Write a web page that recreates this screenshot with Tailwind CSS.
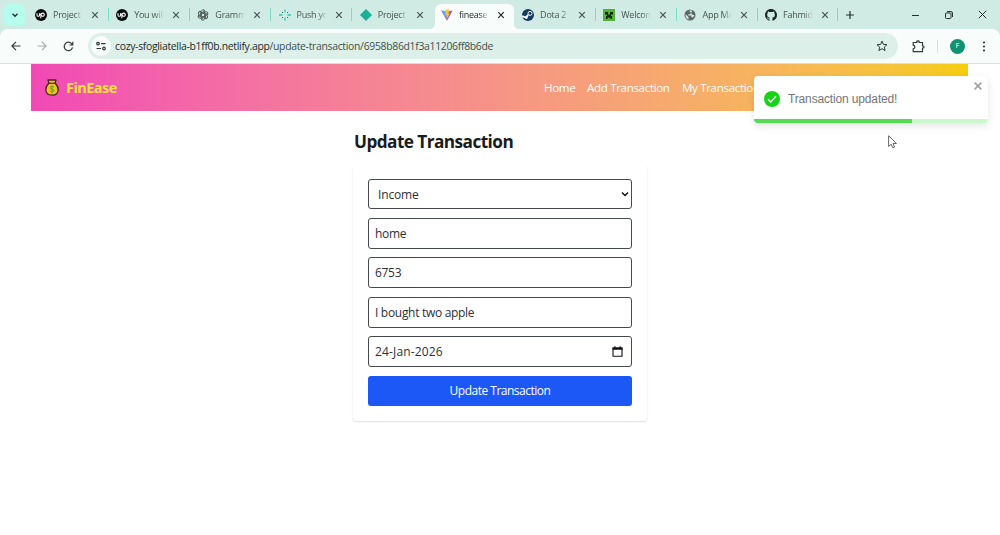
<!DOCTYPE html>
<html lang="en">
  <head>
    <meta charset="UTF-8" />
    <meta name="viewport" content="width=device-width, initial-scale=1.0" />
    <title>finease</title>
    <script src="https://cdn.jsdelivr.net/npm/@tailwindcss/browser@4"></script>
  </head>
  <body
    class="h-[535px] w-[1000px] overflow-hidden bg-white font-['Open_Sans','Noto_Sans',sans-serif] text-[#2b3038]"
  >
    <!-- Shared icons for the tabs -->
    <svg class="hidden">
      <symbol id="close" viewBox="0 0 8 8">
        <path d="M1.2 1.2l5.6 5.6M6.8 1.2L1.2 6.8" fill="none" stroke="currentColor" stroke-width="1.2" />
      </symbol>
      <symbol id="upwork" viewBox="0 0 12 12">
        <circle cx="6" cy="6" r="6" fill="#080b0b" />
        <path d="M2 4.2v1.7q0 1.4 1.3 1.4t1.3-1.4V4.2q1 3.1 3.1 3.1A1.6 1.6 0 1 0 6.1 5.700L5.700 9.200" fill="none" stroke="#fff" stroke-width="1.1" />
      </symbol>
    </svg>

    <!-- Tab strip -->
    <div class="flex h-[29px] bg-[#d0ebe3] text-[9px] tracking-[-0.25px] text-[#46544f]">
      <button class="mt-1 ml-1 flex h-[22px] w-[21px] shrink-0 items-center justify-center rounded-md bg-[#b5fdec] text-[#17342d]">
        <svg class="size-2" viewBox="0 0 8 8"><path d="M1.5 2.8L4 5.2l2.5-2.4" fill="none" stroke="currentColor" stroke-width="1.4" /></svg>
      </button>

      <div class="ml-[2.4px] flex w-[81.2px] shrink-0 items-center pl-[7.6px]">
        <svg class="size-3 shrink-0"><use href="#upwork" /></svg>
        <span class="mt-px ml-[6px] w-[30px] whitespace-nowrap mask-r-from-70%">Project</span>
        <svg class="ml-[8px] size-2 shrink-0"><use href="#close" /></svg>
        <i class="ml-auto h-[13px] w-px bg-[#72e1c6]"></i>
      </div>
      <div class="flex w-[81.2px] shrink-0 items-center pl-[7.6px]">
        <svg class="size-3 shrink-0"><use href="#upwork" /></svg>
        <span class="mt-px ml-[6px] w-[30px] whitespace-nowrap mask-r-from-70%">You will</span>
        <svg class="ml-[8px] size-2 shrink-0"><use href="#close" /></svg>
        <i class="ml-auto h-[13px] w-px bg-[#72e1c6]"></i>
      </div>
      <div class="flex w-[81.2px] shrink-0 items-center pl-[7.6px]">
        <svg class="size-3 shrink-0" viewBox="0 0 12 12" fill="none" stroke="#4d5a56" stroke-width="1">
          <path d="M4.300 6.900V2.800a2 2 0 0 1 3.700-1L4.300 4" />
          <path d="M4.300 6.900V2.800a2 2 0 0 1 3.700-1L4.300 4" transform="rotate(60 6 6)" />
          <path d="M4.300 6.900V2.800a2 2 0 0 1 3.700-1L4.300 4" transform="rotate(120 6 6)" />
          <path d="M4.300 6.900V2.800a2 2 0 0 1 3.700-1L4.300 4" transform="rotate(180 6 6)" />
          <path d="M4.300 6.900V2.800a2 2 0 0 1 3.700-1L4.300 4" transform="rotate(240 6 6)" />
          <path d="M4.300 6.900V2.800a2 2 0 0 1 3.700-1L4.300 4" transform="rotate(300 6 6)" />
        </svg>
        <span class="mt-px ml-[6px] w-[30px] whitespace-nowrap mask-r-from-70%">Gramm</span>
        <svg class="ml-[8px] size-2 shrink-0"><use href="#close" /></svg>
        <i class="ml-auto h-[13px] w-px bg-[#72e1c6]"></i>
      </div>
      <div class="flex w-[81.2px] shrink-0 items-center pl-[7.6px]">
        <svg class="size-3 shrink-0" viewBox="0 0 12 12" fill="none" stroke="#2fc9b4" stroke-width="1.3">
          <path d="M0 6h3.500M8.500 6H12M6 .5v3M6 8.500v3" />
          <path d="M2.800 2.800l1.200 1.200M9.200 2.800L8 4M2.800 9.200L4 8M9.200 9.200L8 8" stroke="#436c66" stroke-width="1" />
        </svg>
        <span class="mt-px ml-[6px] w-[30px] whitespace-nowrap mask-r-from-70%">Push yo</span>
        <svg class="ml-[8px] size-2 shrink-0"><use href="#close" /></svg>
        <i class="ml-auto h-[13px] w-px bg-[#72e1c6]"></i>
      </div>
      <div class="flex w-[81.2px] shrink-0 items-center pl-[7.6px]">
        <svg class="size-3 shrink-0" viewBox="0 0 12 12"><path d="M6 .2L11.800 6 6 11.800.2 6z" fill="#1aaf98" stroke="#1aaf98" stroke-linejoin="round" stroke-width=".4" /></svg>
        <span class="mt-px ml-[6px] w-[30px] whitespace-nowrap mask-r-from-70%">Project</span>
        <svg class="ml-[8px] size-2 shrink-0"><use href="#close" /></svg>
      </div>
      <!-- Active tab -->
      <div class="relative flex w-[81.2px] shrink-0 items-center pl-[7.6px] text-[#222c29]">
        <svg class="absolute top-1 -left-[4px] h-[25px] w-[90px]" viewBox="0 0 90 25">
          <path d="M0 25q6 0 6-6V7q0-7 7-7h65q7 0 7 7v12q0 6 5 6z" fill="#f8fdfb" />
        </svg>
        <svg class="relative size-3 shrink-0" viewBox="0 0 12 12">
          <path d="M.3 1.600L6 11.800l5.700-10.200L6 2.600z" fill="#8b5cf0" />
          <path d="M.3 1.600L4 2.200l2 9.600z" fill="#53a6fa" />
          <path d="M8.200.2L4.500.9l-.3 5 1.300-.2-.4 2 1-.3L5.600 10l3.200-5.400-1.500.2z" fill="#ffc421" />
        </svg>
        <span class="relative mt-px ml-[6px] w-[30px] whitespace-nowrap mask-r-from-70%">finease</span>
        <svg class="relative ml-[8px] size-2 shrink-0"><use href="#close" /></svg>
      </div>
      <div class="flex w-[81.2px] shrink-0 items-center pl-[7.6px]">
        <svg class="size-3 shrink-0" viewBox="0 0 12 12">
          <circle cx="6" cy="6" r="6" fill="#163b62" />
          <path d="M.2 7l3.400 1.500L6.200 6" fill="none" stroke="#fff" stroke-width="1.8" />
          <circle cx="8" cy="4.400" r="2" fill="#163b62" stroke="#fff" stroke-width="1" />
          <circle cx="4.300" cy="8.600" r="1.400" fill="#fff" />
        </svg>
        <span class="mt-px ml-[6px] w-[30px] whitespace-nowrap mask-r-from-70%">Dota 2</span>
        <svg class="ml-[8px] size-2 shrink-0"><use href="#close" /></svg>
        <i class="ml-auto h-[13px] w-px bg-[#72e1c6]"></i>
      </div>
      <div class="flex w-[81.2px] shrink-0 items-center pl-[7.6px]">
        <svg class="size-3 shrink-0" viewBox="0 0 12 12">
          <path d="M0 0h12v12H0z" fill="#51b236" />
          <path d="M2 3h3v2.500h2V3h3v2.500H8V7h1v3H7.500V8.800h-3V10H3V7h1V5.500H2z" fill="#102b0d" />
        </svg>
        <span class="mt-px ml-[6px] w-[30px] whitespace-nowrap mask-r-from-70%">Welcom</span>
        <svg class="ml-[8px] size-2 shrink-0"><use href="#close" /></svg>
        <i class="ml-auto h-[13px] w-px bg-[#72e1c6]"></i>
      </div>
      <div class="flex w-[81.2px] shrink-0 items-center pl-[7.6px]">
        <svg class="size-3 shrink-0" viewBox="0 0 12 12">
          <circle cx="6" cy="6" r="5.500" fill="#5c6663" />
          <path d="M1.600 5.200L4.500 8v2.600Q1.300 9.400 1.600 5.200zM5 1.500h3v1.300L6.500 4v1.200H4.600L4 6.400h3.400v1.800l1.600.3 1.500-2.600H8.700L7.500 4.500" fill="#d0ebe3" />
        </svg>
        <span class="mt-px ml-[6px] w-[30px] whitespace-nowrap mask-r-from-70%">App Ma</span>
        <svg class="ml-[8px] size-2 shrink-0"><use href="#close" /></svg>
        <i class="ml-auto h-[13px] w-px bg-[#72e1c6]"></i>
      </div>
      <div class="flex w-[80px] shrink-0 items-center pl-[7px]">
        <svg class="size-3 shrink-0" viewBox="0 0 16 16">
          <path fill="#1c2624" d="M8 0C3.58 0 0 3.58 0 8c0 3.54 2.29 6.53 5.47 7.59.4.07.55-.17.55-.38 0-.19-.01-.82-.01-1.49-2.01.37-2.53-.49-2.69-.94-.09-.23-.48-.94-.82-1.13-.28-.15-.68-.52-.01-.53.63-.01 1.08.58 1.23.82.72 1.21 1.87.87 2.33.66.07-.52.28-.87.51-1.07-1.78-.2-3.64-.89-3.64-3.95 0-.87.31-1.59.82-2.15-.08-.2-.36-1.02.08-2.12 0 0 .67-.21 2.2.82a7.4 7.4 0 0 1 4 0c1.53-1.04 2.2-.82 2.2-.82.44 1.1.16 1.92.08 2.12.51.56.82 1.27.82 2.15 0 3.07-1.87 3.75-3.65 3.95.29.25.54.73.54 1.48 0 1.07-.01 1.93-.01 2.2 0 .21.15.46.55.38A8.01 8.01 0 0 0 16 8c0-4.42-3.58-8-8-8z" />
        </svg>
        <span class="mt-px ml-[6px] w-[30px] whitespace-nowrap mask-r-from-70%">Fahmid</span>
        <svg class="ml-[8px] size-2 shrink-0"><use href="#close" /></svg>
        <i class="ml-auto h-[13px] w-px bg-[#72e1c6]"></i>
      </div>

      <div class="flex flex-1 items-center text-[#25312e]">
        <svg class="ml-2 size-2" viewBox="0 0 8 8"><path d="M4 0v8M0 4h8" stroke="currentColor" stroke-width="1.2" /></svg>
        <svg class="ml-[57px] h-2 w-[9px]" viewBox="0 0 9 8"><path d="M1 4.500h7" stroke="currentColor" /></svg>
        <svg class="ml-[25px] size-2" viewBox="0 0 8 8" fill="none" stroke="currentColor"><rect x=".5" y="2" width="5.500" height="5.500" rx=".8" /><path d="M2 .6h4q1.500 0 1.500 1.500V6" /></svg>
        <svg class="ml-[25px] size-[9px]" viewBox="0 0 9 9"><path d="M.8.8l7.400 7.400M8.200.8L.8 8.200" stroke="currentColor" /></svg>
      </div>
    </div>

    <!-- Address bar -->
    <div class="h-[35px] bg-[#d0ebe3]">
      <div class="flex h-[35px] items-center rounded-t-lg border-b border-[#d5e3df] bg-[#f8fdfb] text-[#303b38]">
        <svg class="ml-[11px] size-[10px]" viewBox="0 0 10 10"><path d="M9.500 5H1M5 .9L.9 5 5 9.100" fill="none" stroke="currentColor" stroke-width="1.2" /></svg>
        <svg class="ml-4 size-[10px] text-[#a4aeab]" viewBox="0 0 10 10"><path d="M.5 5H9M5 .9L9.100 5 5 9.100" fill="none" stroke="currentColor" stroke-width="1.2" /></svg>
        <svg class="ml-4 size-[11px]" viewBox="0 0 11 11"><path d="M9.500 6.300A4.200 4.200 0 1 1 8.700 2.800L9.700 4M9.800.8V4H6.500" fill="none" stroke="currentColor" stroke-width="1.2" /></svg>
        <div class="ml-[14px] flex h-[26px] w-[810px] items-center rounded-full bg-[#dcefe8]">
          <div class="ml-[3px] flex size-[20px] items-center justify-center rounded-full bg-[#f8fdfb]">
            <svg class="size-[10px]" viewBox="0 0 10 10" fill="none" stroke="currentColor" stroke-width="1.2"><circle cx="2" cy="2.600" r="1.300" /><path d="M5 2.600h4.500M.5 7.500H5" /><circle cx="8" cy="7.500" r="1.300" /></svg>
          </div>
          <span class="mt-px ml-[4px] text-[10.4px] tracking-[-0.3px] whitespace-nowrap text-[#43514d]"><span class="text-[#222d29]">cozy-sfogliatella-b1ff0b.netlify.app</span>/update-transaction/6958b86d1f3a11206ff8b6de</span>
          <svg class="mr-[10px] ml-auto size-3" viewBox="0 0 12 12"><path d="M6 1.100l1.400 3.300 3.600.3-2.700 2.400.8 3.500L6 8.700l-3.100 1.900.8-3.500L1 4.700l3.600-.3z" fill="none" stroke="currentColor" /></svg>
        </div>
        <svg class="ml-[14px] size-[13px]" viewBox="0 0 13 13"><path d="M1.200 2.500h3.600V1.700q0-.8 1.200-.8t1.200.8v.8h3.300v3.300h.6q.9 0 .9 1.100t-.9 1.100h-.6v3.600H1.200V8.800q1.700-.3 1.700-1.800T1.200 5.200z" fill="none" stroke="currentColor" stroke-width="1.200" /></svg>
        <i class="ml-[12px] h-[13px] w-px bg-[#b2f3e2]"></i>
        <span class="ml-[12px] flex size-[15px] items-center justify-center rounded-full bg-[#119372] text-[7.500px] text-white">F</span>
        <svg class="ml-[17px] h-[11px] w-[4px]" viewBox="0 0 4 11" fill="currentColor"><circle cx="2" cy="1.500" r="1.100" /><circle cx="2" cy="5.500" r="1.100" /><circle cx="2" cy="9.500" r="1.100" /></svg>
      </div>
    </div>

    <!-- Navbar -->
    <nav class="mr-[32px] ml-[31px] flex h-[47px] items-center bg-linear-to-r from-[#f148b5] to-[#f6cc08] text-[11.600px] text-white">
      <svg class="ml-[14px] h-[17px] w-[14px]" viewBox="0 0 14 17">
        <path d="M4 4.300Q.8 6.900.8 10.600q0 5.600 6.200 5.600t6.200-5.600Q13.200 6.900 10 4.300L11 1H3z" fill="#f6bf1e" stroke="#45271b" stroke-width="1.300" stroke-linejoin="round" />
        <path d="M3.600 4.300h6.800" stroke="#45271b" stroke-width="1.200" />
        <path d="M9 8.300Q8.300 7.400 7 7.400q-1.900 0-1.900 1.400T7 10.200t1.900 1.400T7 13q-1.400 0-2.100-.9M7 6.300v7.800" fill="none" stroke="#54a52c" />
      </svg>
      <span class="mt-px ml-[7px] text-[14.400px] font-bold tracking-[-0.5px] text-[#fae13c]">FinEase</span>
      <div class="mt-px ml-auto flex w-[424px] gap-[12px] tracking-[-0.35px] whitespace-nowrap">
        <a class="w-[31px]">Home</a>
        <a class="w-[83px]">Add Transaction</a>
        <a>My Transactions</a>
      </div>
    </nav>

    <!-- Update form -->
    <main class="mx-auto w-[294px] pt-[19px]">
      <h1 class="h-6 pl-px text-[17.200px] leading-6 font-bold tracking-[-0.55px] whitespace-nowrap text-[#181b20]">Update Transaction</h1>
      <form class="mt-[11px] flex h-[256px] flex-col rounded-sm px-[15px] pt-[14px] text-[12px] tracking-[-0.3px] shadow-[0_1px_2px_rgb(0_0_0/0.14)]">
        <div class="flex h-[30px] items-center justify-between rounded-[3px] border border-[#45484d] pr-[2px] pl-[9px]">
          <span class="mt-px tracking-[-0.15px]">Income</span>
          <svg class="size-2" viewBox="0 0 8 8"><path d="M1 2.500l3 3 3-3" fill="none" stroke="#111" stroke-width="1.500" /></svg>
        </div>
        <div class="mt-[8.500px] flex h-[31px] items-center rounded-[3px] border border-[#45484d] px-[6px] pt-px">home</div>
        <div class="mt-[8.500px] flex h-[31px] items-center rounded-[3px] border border-[#45484d] px-[6px] pt-px">6753</div>
        <div class="mt-[8.500px] flex h-[31px] items-center rounded-[3px] border border-[#45484d] px-[6px] pt-px">I bought two apple</div>
        <div class="mt-[8.500px] flex h-[31px] items-center justify-between rounded-[3px] border border-[#45484d] pr-[8px] pl-[6px]">
          <span class="mt-px tracking-[0.15px]">24-Jan-2026</span>
          <svg class="h-[11px] w-[11px]" viewBox="0 0 11 11"><path d="M1 2h9v8.300H1z" fill="none" stroke="#111" stroke-width="1.100" stroke-linejoin="round" /><path d="M.5 1.500h10v2.300H.5zM2.300.2h1.200v2H2.300zM7.500.2h1.200v2H7.500z" fill="#111" /></svg>
        </div>
        <button type="button" class="mt-[8.500px] h-[30px] rounded-[3px] bg-[#1b58f5] pt-px tracking-[-0.5px] text-white">Update Transaction</button>
      </form>
    </main>

    <!-- Toast -->
    <div class="absolute top-[76px] left-[754px] h-[47px] w-[234px] overflow-hidden rounded-[4px] bg-white font-['Liberation_Sans',sans-serif] text-[12px] text-[#757575] shadow-[0_3px_9px_rgb(0_0_0/0.1)]">
      <div class="flex h-[46px] items-center pl-[10px]">
        <svg class="size-4" viewBox="0 0 16 16"><circle cx="8" cy="8" r="8" fill="#13d513" /><path d="M4 8.300l2.700 2.700L12 5.200" fill="none" stroke="#fff" stroke-width="1.500" /></svg>
        <span class="ml-2 tracking-[-0.15px] whitespace-nowrap">Transaction updated!</span>
        <svg class="mr-[5.500px] mb-[26px] ml-auto size-[10px]" viewBox="0 0 10 10"><path d="M1.600 1.600l6.800 6.800M8.400 1.600L1.600 8.400" stroke="#a2a2a2" stroke-width="1.700" /></svg>
      </div>
      <div class="absolute bottom-0 h-[4px] w-full bg-[#cbf8cb]"><div class="h-full w-[158px] bg-[#55dc52]"></div></div>
    </div>

    <!-- Mouse pointer -->
    <svg class="absolute top-[135px] left-[888px] h-[14px] w-[10px]" viewBox="0 0 10 14"><path d="M.6.8v10.700l2.500-2.300 1.700 3.600 1.800-.8L5 8.500h3.500z" fill="#fff" stroke="#555" stroke-width=".9" /></svg>
  </body>
</html>
